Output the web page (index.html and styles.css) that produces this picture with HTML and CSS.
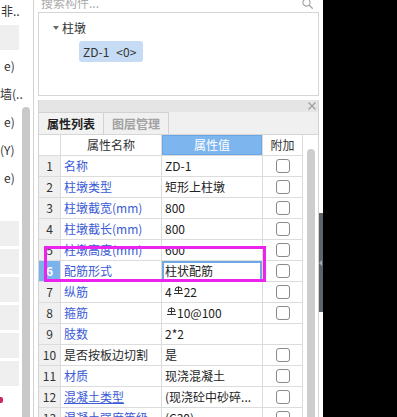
FILE: index.html
```html
<!DOCTYPE html>
<html lang="zh">
<head>
<meta charset="utf-8">
<title>柱墩属性</title>
<link rel="stylesheet" href="styles.css">
</head>
<body>
<div class="app">
  <aside class="side">
    <div class="side-list">
      <div class="side-item first pad-1">非..</div>
      <div class="side-block"></div>
      <div class="side-item start pad-5">e)</div>
      <div class="side-item pad-0">墙(..</div>
      <div class="side-item pad-5">e)</div>
      <div class="side-item pad-0">(Y)</div>
      <div class="side-item pad-5">e)</div>
      <div class="side-block gap"></div>
      <div class="side-block"></div>
      <div class="side-block"></div>
      <div class="side-block"></div>
      <div class="side-block"></div>
      <div class="side-block"></div>
      <div class="side-dot"></div>
    </div>
    <div class="side-scroll"><div class="side-thumb"></div></div>
  </aside>

  <main class="main">
    <div class="search">
      <span class="placeholder">搜索构件...</span>
      <svg class="search-icon" width="11" height="11" viewBox="0 0 11 11"><circle cx="4.5" cy="4.5" r="3.6" fill="none" stroke="#a6a6a6" stroke-width="1.2"/><path d="M7.2 7.2 L10.3 10.3" stroke="#a6a6a6" stroke-width="1.3" stroke-linecap="round"/></svg>
    </div>

    <div class="tree">
      <div class="tree-row"><span class="caret"></span><span>柱墩</span></div>
      <div class="tree-node"><span>ZD-1</span><span class="node-count">&lt;0&gt;</span></div>
    </div>

    <section class="props">
      <div class="props-head">
        <svg width="8" height="8" viewBox="0 0 8 8"><path d="M0.5 0.5 L7.5 7.5 M7.5 0.5 L0.5 7.5" stroke="#9c9c9c" stroke-width="1.1"/></svg>
      </div>
      <div class="tabs">
        <div class="tab active">属性列表</div>
        <div class="tab">图层管理</div>
      </div>
      <div class="grid-wrap">
        <div class="grid">
          <div class="hd"></div><div class="hd">属性名称</div><div class="hd hd-sel">属性值</div><div class="hd">附加</div>

          <div class="num">1</div><div class="name">名称</div><div class="val">ZD-1</div><div class="ext"><span class="cb"></span></div>
          <div class="num">2</div><div class="name">柱墩类型</div><div class="val">矩形上柱墩</div><div class="ext"><span class="cb"></span></div>
          <div class="num">3</div><div class="name">柱墩截宽(mm)</div><div class="val">800</div><div class="ext"><span class="cb"></span></div>
          <div class="num">4</div><div class="name">柱墩截长(mm)</div><div class="val">800</div><div class="ext"><span class="cb"></span></div>
          <div class="num">5</div><div class="name">柱墩高度(mm)</div><div class="val">600</div><div class="ext"><span class="cb"></span></div>
          <div class="num num-sel">6</div><div class="name">配筋形式</div><div class="val val-edit">柱状配筋</div><div class="ext"><span class="cb"></span></div>
          <div class="num">7</div><div class="name">纵筋</div><div class="val">4<svg class="rebar" width="9" height="8" viewBox="0 0 9 8"><path d="M1 4.5 A3.5 3.5 0 0 1 8 4.5 Z M4.5 0.5 V7.5 M0 7.5 H9" fill="none" stroke="#333" stroke-width="1"/></svg>22</div><div class="ext"><span class="cb"></span></div>
          <div class="num">8</div><div class="name">箍筋</div><div class="val"><svg class="rebar lead" width="9" height="8" viewBox="0 0 9 8"><path d="M1 4.5 A3.5 3.5 0 0 1 8 4.5 Z M4.5 0.5 V7.5 M0 7.5 H9" fill="none" stroke="#333" stroke-width="1"/></svg>10@100</div><div class="ext"><span class="cb"></span></div>
          <div class="num">9</div><div class="name">肢数</div><div class="val">2*2</div><div class="ext"></div>
          <div class="num">10</div><div class="name plain">是否按板边切割</div><div class="val">是</div><div class="ext"><span class="cb"></span></div>
          <div class="num">11</div><div class="name">材质</div><div class="val">现浇混凝土</div><div class="ext"><span class="cb"></span></div>
          <div class="num">12</div><div class="name link">混凝土类型</div><div class="val">(现浇砼中砂碎...</div><div class="ext"><span class="cb"></span></div>
          <div class="num">13</div><div class="name">混凝土强度等级</div><div class="val">(C30)</div><div class="ext"><span class="cb"></span></div>
        </div>
        <div class="vscroll"><div class="vthumb"></div></div>
      </div>
      <div class="mark"></div>
    </section>
  </main>

  <div class="strip">
    <div class="strip-handle"><span class="strip-arrow"></span></div>
  </div>
  <div class="blackout"></div>
</div>
</body>
</html>
```

FILE: styles.css
```css
* { box-sizing: border-box; margin: 0; padding: 0; }

html, body {
  width: 397px;
  height: 417px;
  overflow: hidden;
  background: #fff;
}

body {
  font-family: "Noto Sans CJK SC", "Noto Sans", sans-serif;
  font-size: 12px;
  color: #333;
}

.app {
  display: flex;
  width: 397px;
  height: 417px;
  overflow: hidden;
}

/* ---------- left clipped panel ---------- */
.side {
  width: 34px;
  flex: none;
  display: flex;
  border-right: 1px solid #d2d2d2;
}

.side-list {
  width: 20px;
  flex: none;
  display: flex;
  flex-direction: column;
}

.side-item {
  height: 28px;
  flex: none;
  display: flex;
  align-items: center;
  white-space: nowrap;
  line-height: 28px;
  color: #333;
  font-size: 12px;
}
.side-item.first { height: 21px; line-height: 21px; }
.side-item.start { margin-top: 2px; }
.pad-0 { padding-left: 0; }
.pad-1 { padding-left: 1px; }
.pad-5 { padding-left: 4px; }

.side-block {
  width: 19px;
  height: 25px;
  flex: none;
  background: #efefef;
  margin-top: 3px;
}
.side-block:nth-child(2) { margin-top: 4px; }
.side-block.gap { margin-top: 29px; }

.side-dot {
  width: 3px;
  height: 6px;
  margin-top: 11px;
  background: #d0245a;
  border-radius: 0 2px 2px 0;
}

.side-scroll {
  flex: 1;
  padding-left: 2px;
}
.side-thumb {
  width: 8px;
  height: 330px;
  margin-top: 107px;
  background: #c9c9c9;
  border-radius: 4px 4px 0 0;
}

/* ---------- main column ---------- */
.main {
  width: 281px;
  flex: none;
  margin-left: 4px;
  display: flex;
  flex-direction: column;
}

.search {
  height: 18px;
  margin-top: -6px;
  flex: none;
  display: flex;
  align-items: center;
  justify-content: space-between;
  padding: 0 6px 0 3px;
}
.placeholder { color: #ababab; line-height: 18px; }
.search-icon { display: block; }

.tree {
  height: 84px;
  flex: none;
  border: 1px solid #d6d6d6;
  padding-top: 5px;
}
.tree-row {
  height: 20px;
  display: flex;
  align-items: center;
  padding-left: 14px;
  line-height: 20px;
  color: #333;
}
.caret {
  width: 0;
  height: 0;
  border-left: 3px solid transparent;
  border-right: 3px solid transparent;
  border-top: 4px solid #6a6a6a;
  margin-right: 3px;
}
.tree-node {
  display: flex;
  align-items: center;
  width: 64px;
  height: 21px;
  margin: 3px 0 0 40px;
  padding-left: 4px;
  background: #c5dcf4;
  border-radius: 3px;
  line-height: 21px;
  color: #333;
  white-space: nowrap;
}
.node-count { margin-left: 7px; }

/* ---------- property panel ---------- */
.props {
  position: relative;
  flex: 1;
  margin-top: 4px;
  border-left: 1px solid #d3d3d3;
  border-right: 1px solid #d3d3d3;
  display: flex;
  flex-direction: column;
}

.props-head {
  height: 12px;
  flex: none;
  background: #e5e5e5;
  display: flex;
  align-items: center;
  justify-content: flex-end;
  padding-right: 2px;
}
.props-head svg { display: block; }

.tabs {
  height: 23px;
  flex: none;
  display: flex;
  background: #f0f0f0;
  border-bottom: 1px solid #d6d6d6;
}
.tab {
  width: 65px;
  display: flex;
  align-items: center;
  justify-content: center;
  border-top: 1px solid #d2d2d2;
  border-right: 1px solid #d2d2d2;
  font-weight: bold;
  color: #a2a2a2;
  line-height: 20px;
}
.tab.active { color: #222; background: #f2f2f2; }

.grid-wrap {
  display: flex;
  flex: 1;
}

.grid {
  width: 264px;
  flex: none;
  display: grid;
  grid-template-columns: 22px 101px 101px 40px;
  grid-auto-rows: 21px;
  align-content: start;
}
.grid > div {
  border-right: 1px solid #dcdcdc;
  border-bottom: 1px solid #dcdcdc;
  line-height: 20px;
  white-space: nowrap;
  overflow: hidden;
}

.hd {
  text-align: center;
  color: #333;
  background: #fff;
}
.hd-sel {
  background: #7db5ee;
  color: #fff;
  box-shadow: inset 0 0 0 1px #6aa6e6;
}

.num {
  background: #f0f0f0;
  text-align: center;
  color: #333;
}
.num-sel {
  background: #7ab3ec;
  color: #fff;
  font-weight: bold;
}

.name {
  padding-left: 3px;
  color: #3a5ad6;
}
.name.plain { color: #2b2b2b; }
.name.link { text-decoration: underline; }

.val {
  padding-left: 3px;
  color: #222;
}
.val-edit { box-shadow: inset 0 0 0 2px #6fa9e4; }

.rebar {
  display: inline-block;
  vertical-align: 3px;
  margin: 0 1px 0 2px;
}
.rebar.lead { margin-left: 2px; }

.ext {
  display: flex;
  align-items: center;
  justify-content: center;
}
.cb {
  width: 14px;
  height: 14px;
  border: 1px solid #8a8a8a;
  border-radius: 3px;
  background: #fff;
}

.vscroll {
  flex: 1;
  padding-left: 4px;
  background: #fff;
}
.vthumb {
  width: 8px;
  height: 300px;
  margin-top: 14px;
  background: #cdcdcd;
  border-radius: 4px 4px 0 0;
}

/* annotation overlay */
.mark {
  position: absolute;
  left: 5px;
  top: 146px;
  width: 222px;
  height: 36px;
  border: 3px solid #ee22ee;
}

/* ---------- right edge ---------- */
.strip {
  width: 4px;
  flex: none;
  background: #fff;
}
.strip-handle {
  height: 99px;
  margin-top: 213px;
  background: #5c646e;
  display: flex;
  align-items: center;
}
.strip-arrow {
  width: 0;
  height: 0;
  border-top: 3px solid transparent;
  border-bottom: 3px solid transparent;
  border-right: 3px solid #a3a9b0;
}

.blackout {
  flex: 1;
  background: #000;
}
```
